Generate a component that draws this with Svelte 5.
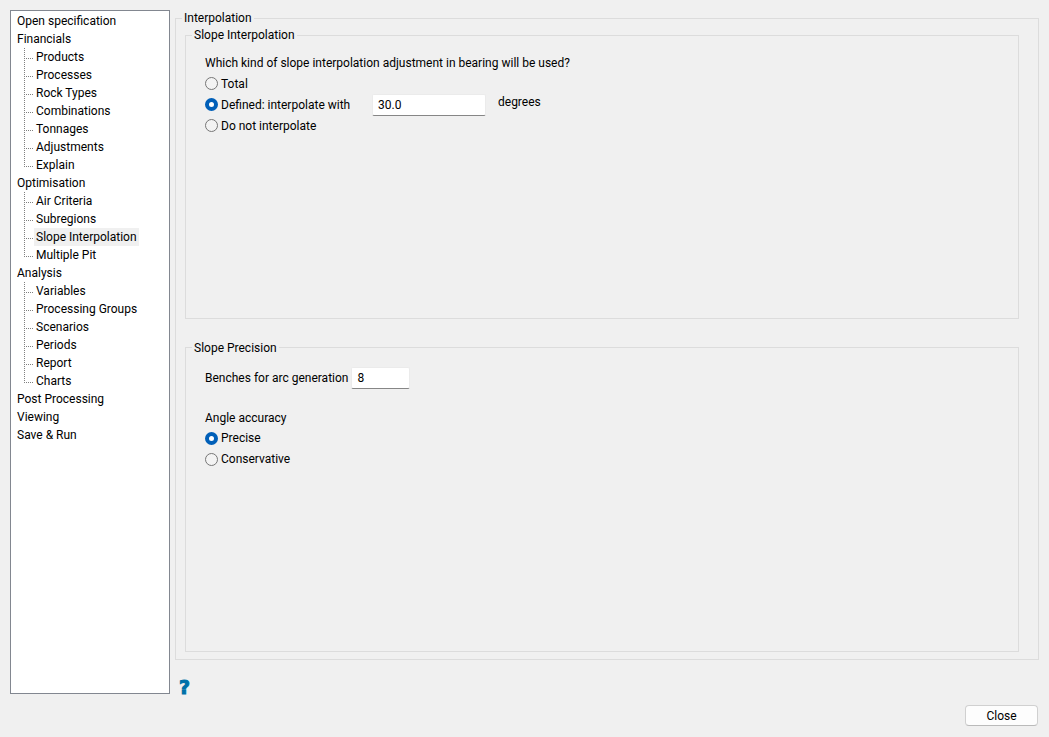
<script>
  const tree = [
    { name: 'Open specification' },
    {
      name: 'Financials',
      children: ['Products', 'Processes', 'Rock Types', 'Combinations', 'Tonnages', 'Adjustments', 'Explain']
    },
    {
      name: 'Optimisation',
      children: ['Air Criteria', 'Subregions', 'Slope Interpolation', 'Multiple Pit']
    },
    {
      name: 'Analysis',
      children: ['Variables', 'Processing Groups', 'Scenarios', 'Periods', 'Report', 'Charts']
    },
    { name: 'Post Processing' },
    { name: 'Viewing' },
    { name: 'Save & Run' }
  ]

  let selected = 'Slope Interpolation'
  let interpolation = 'defined'
  let degrees = '30.0'
  let benches = '8'
  let accuracy = 'precise'
</script>

<div class="dialog">
  <div class="columns">
    <nav>
      <ul>
        {#each tree as item}
          <li>
            <button class="node" class:selected={selected === item.name} on:click={() => (selected = item.name)}>{item.name}</button>
            {#if item.children}
              <ul>
                {#each item.children as child}
                  <li class="child">
                    <button class="node" class:selected={selected === child} on:click={() => (selected = child)}>{child}</button>
                  </li>
                {/each}
              </ul>
            {/if}
          </li>
        {/each}
      </ul>
    </nav>

    <main>
      <fieldset class="outer">
        <legend>Interpolation</legend>
        <div class="groups">
          <fieldset class="slope">
            <legend>Slope Interpolation</legend>
            <div class="content">
              <p>Which kind of slope interpolation adjustment in bearing will be used?</p>
              <div class="row">
                <label><input type="radio" name="interpolation" value="total" bind:group={interpolation} />Total</label>
              </div>
              <div class="row">
                <label class="defined"><input type="radio" name="interpolation" value="defined" bind:group={interpolation} />Defined: interpolate with</label>
                <input class="text degrees" type="text" id="degrees" bind:value={degrees} />
                <label class="unit" for="degrees">degrees</label>
              </div>
              <div class="row">
                <label><input type="radio" name="interpolation" value="none" bind:group={interpolation} />Do not interpolate</label>
              </div>
            </div>
          </fieldset>

          <fieldset class="precision">
            <legend>Slope Precision</legend>
            <div class="content">
              <div class="row benches">
                <label for="benches">Benches for arc generation</label>
                <input class="text" type="text" id="benches" bind:value={benches} />
              </div>
              <p>Angle accuracy</p>
              <div class="row">
                <label><input type="radio" name="accuracy" value="precise" bind:group={accuracy} />Precise</label>
              </div>
              <div class="row">
                <label><input type="radio" name="accuracy" value="conservative" bind:group={accuracy} />Conservative</label>
              </div>
            </div>
          </fieldset>
        </div>
      </fieldset>
      <button class="help" title="Help">?</button>
    </main>
  </div>

  <footer>
    <button class="close">Close</button>
  </footer>
</div>

<style>
  :global(body) {
    margin: 0;
    background: #f0f0f0;
  }

  .dialog {
    box-sizing: border-box;
    display: flex;
    flex-direction: column;
    min-height: 100vh;
    padding: 10px 10px 11px;
    font-family: Roboto, 'Noto Sans', sans-serif;
    font-size: 12px;
    line-height: 16px;
    color: #000;
  }

  button, input {
    box-sizing: border-box;
    margin: 0;
    font: inherit;
    color: inherit;
  }

  .columns {
    flex: 1;
    display: flex;
    gap: 5px;
  }

  nav {
    box-sizing: border-box;
    flex: none;
    width: 160px;
    padding: 1px 4px;
    border: 1px solid #828790;
    background: #fff;
  }

  ul {
    margin: 0;
    padding: 0;
    list-style: none;
  }

  .node {
    display: block;
    height: 18px;
    padding: 0 2px;
    border: none;
    background: none;
    line-height: 18px;
    white-space: nowrap;
  }

  .node.selected {
    background: #f0f0f0;
  }

  .child {
    display: flex;
    padding-left: 9px;
  }

  /* dotted tree lines */
  .child::before {
    content: '';
    width: 10px;
    background:
      repeating-linear-gradient(to bottom, #808080 0 1px, transparent 1px 2px) 0 0 / 1px 100% no-repeat,
      repeating-linear-gradient(to right, #808080 0 1px, transparent 1px 2px) 0 10px / 9px 1px no-repeat;
  }

  .child:last-child::before {
    background-size: 1px 10px, 9px 1px;
  }

  main {
    flex: 1;
    display: flex;
    flex-direction: column;
    min-width: 0;
  }

  fieldset {
    display: flex;
    flex-direction: column;
    min-width: 0;
    margin: 0;
    padding: 0 6px;
    border: 1px solid #dcdcdc;
  }

  legend {
    padding: 0 2px;
  }

  .outer {
    flex: 1;
  }

  .groups {
    flex: 1;
    display: flex;
    flex-direction: column;
    gap: 21px;
    padding: 1px 13px 7px 3px;
  }

  .slope {
    flex: 14 1 0;
  }

  .precision {
    flex: 15 1 0;
  }

  .content {
    padding: 11px 13px;
  }

  p {
    margin: 0 0 1px;
    line-height: 18px;
  }

  .row {
    display: flex;
    align-items: center;
    height: 21px;
  }

  .row label {
    display: flex;
    align-items: center;
    gap: 3px;
    white-space: nowrap;
  }

  .row .defined {
    width: 167px;
  }

  .row .unit {
    align-self: flex-start;
    margin-left: 12px;
  }

  .benches {
    height: 22px;
    gap: 3px;
    margin-bottom: 20px;
  }

  .text {
    width: 59px;
    height: 22px;
    padding: 0 5px;
    border: 1px solid #ebebeb;
    border-bottom-color: #868686;
    border-radius: 2px;
    background: #fff;
    outline: none;
  }

  .text.degrees {
    width: 114px;
  }

  input[type='radio'] {
    appearance: none;
    flex: none;
    width: 13px;
    height: 13px;
    border: 1px solid #767676;
    border-radius: 50%;
    background: #f3f3f3;
  }

  input[type='radio']:checked {
    border: 4px solid #005fb8;
    background: #fff;
  }

  .help {
    align-self: flex-start;
    height: 22px;
    margin: 16px 0 -4px 4px;
    padding: 0;
    border: none;
    background: none;
    font-family: 'DejaVu Sans', sans-serif;
    font-size: 19px;
    font-weight: bold;
    line-height: 22px;
    color: #0071a9;
    -webkit-text-stroke: 1px #0071a9;
  }

  footer {
    display: flex;
    justify-content: flex-end;
    padding: 11px 1px 0 0;
  }

  .close {
    width: 73px;
    height: 21px;
    padding: 0;
    border: 1px solid #d0d0d0;
    border-bottom-color: #bababa;
    border-radius: 4px;
    background: #fdfdfd;
  }
</style>
